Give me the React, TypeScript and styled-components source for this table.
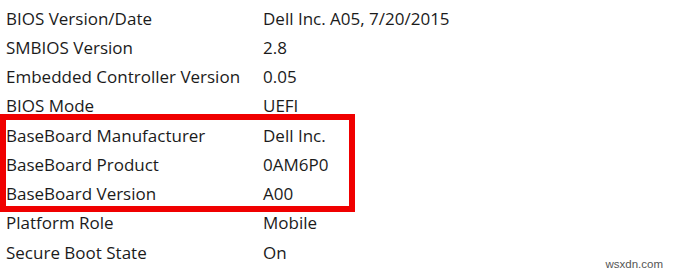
import styled, { createGlobalStyle } from "styled-components";

interface InfoRow {
  label: string;
  value: string;
}

const rowsBefore: InfoRow[] = [
  { label: "BIOS Version/Date", value: "Dell Inc. A05, 7/20/2015" },
  { label: "SMBIOS Version", value: "2.8" },
  { label: "Embedded Controller Version", value: "0.05" },
  { label: "BIOS Mode", value: "UEFI" },
];

const rowsMarked: InfoRow[] = [
  { label: "BaseBoard Manufacturer", value: "Dell Inc." },
  { label: "BaseBoard Product", value: "0AM6P0" },
  { label: "BaseBoard Version", value: "A00" },
];

const rowsAfter: InfoRow[] = [
  { label: "Platform Role", value: "Mobile" },
  { label: "Secure Boot State", value: "On" },
];

function Rows(props: { rows: InfoRow[] }) {
  return <>
    {props.rows.map(r => (
      <Row key={r.label}>
        <Label>{r.label}</Label>
        <Value>{r.value}</Value>
      </Row>
    ))}
  </>
}

export default function App() {
  return <Page>
    <GlobalStyle/>
    <List>
      <Rows rows={rowsBefore}/>
      <Marked>
        <Rows rows={rowsMarked}/>
      </Marked>
      <Rows rows={rowsAfter}/>
    </List>
    <Watermark>wsxdn.com</Watermark>
  </Page>
}

const GlobalStyle = createGlobalStyle`
  html, body {
    margin: 0;
    padding: 0;
    background: #ffffff;
  }
`;

const Page = styled.div`
  position: relative;
  width: 680px;
  height: 272px;
  overflow: hidden;
  background: #ffffff;
  font-family: "Open Sans", "Noto Sans", sans-serif;
  color: #1b1b1b;
`;

const List = styled.div`
  display: flex;
  flex-direction: column;
  padding: 3.5px 0 0 6px;
`;

const Row = styled.div`
  display: grid;
  grid-template-columns: 257px 1fr;
  height: 29.25px;
  line-height: 29.25px;
  font-size: 17px;
  white-space: nowrap;
`;

const Label = styled.span``;

const Value = styled.span``;

const Marked = styled.div`
  position: relative;

  &::before {
    content: "";
    position: absolute;
    left: -6px;
    top: -6.5px;
    width: 355px;
    height: 98px;
    box-sizing: border-box;
    border: 6px solid #f00000;
    pointer-events: none;
  }
`;

const Watermark = styled.span`
  position: absolute;
  right: 17px;
  bottom: 2px;
  font-family: "Liberation Sans", Arial, sans-serif;
  font-size: 11.5px;
  color: #555555;
`;
